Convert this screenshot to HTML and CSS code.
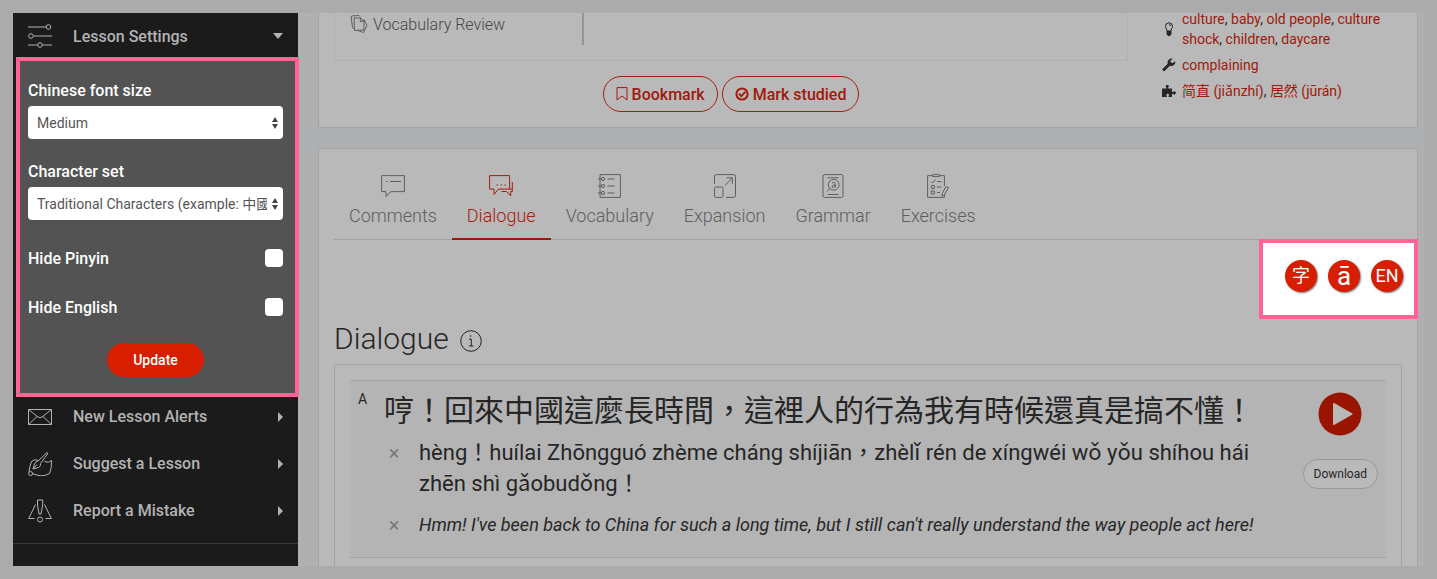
FILE: index.html
```html
<!DOCTYPE html>
<html lang="en">
<head>
    <meta charset="UTF-8">
    <meta name="viewport" content="width=device-width, initial-scale=1.0">
    <title>Lesson - Dialogue</title>
    <link rel="stylesheet" href="styles.css">
</head>
<body>

    <div class="page">
        <aside class="sidebar">
            <button class="side-item side-head" type="button">
                <svg class="side-icon" viewBox="0 0 24 24"><path d="M0 3h18M6 12h18M0 21h9.500M14.500 21H24"/><circle cx="20.500" cy="3" r="2.300"/><circle cx="3" cy="12" r="2.300"/><circle cx="12" cy="21" r="2.300"/></svg>
                <span>Lesson Settings</span>
                <svg class="caret" viewBox="0 0 10 6"><path d="M0 0h10L5 6z"/></svg>
            </button>

            <form class="settings">
                <div class="field">
                    <label for="font-size">Chinese font size</label>
                    <div class="select-wrap">
                        <select id="font-size">
                            <option>Small</option>
                            <option selected>Medium</option>
                            <option>Large</option>
                        </select>
                        <svg class="select-arrows" viewBox="0 0 6 12"><path d="M3 0l3 5H0zM0 7h6l-3 5z"/></svg>
                    </div>
                </div>
                <div class="field">
                    <label for="char-set">Character set</label>
                    <div class="select-wrap">
                        <select id="char-set">
                            <option>Traditional Characters (example: 中國)</option>
                            <option>Simplified Characters (example: 中国)</option>
                        </select>
                        <svg class="select-arrows" viewBox="0 0 6 12"><path d="M3 0l3 5H0zM0 7h6l-3 5z"/></svg>
                    </div>
                </div>
                <div class="check-row">
                    <label for="hide-pinyin">Hide Pinyin</label>
                    <input type="checkbox" id="hide-pinyin">
                </div>
                <div class="check-row">
                    <label for="hide-english">Hide English</label>
                    <input type="checkbox" id="hide-english">
                </div>
                <button class="update-button" type="button">Update</button>
            </form>

            <nav class="side-nav">
                <button class="side-item" type="button">
                    <svg class="side-icon" viewBox="0 0 24 24"><path d="M.5 4.500h23v15H.5zM.5 4.500L10 12q2 1.500 4 0l9.500-7.500M.5 19.500l8.500-8M23.500 19.500l-8.500-8"/></svg>
                    <span>New Lesson Alerts</span>
                    <svg class="caret-right" viewBox="0 0 5 10"><path d="M0 0l5 5-5 5z"/></svg>
                </button>
                <button class="side-item" type="button">
                    <svg class="side-icon" viewBox="0 0 24 24"><path d="M11 8.500Q6.500 6.500 3.500 9.500Q1.500 14 1 20M4.500 21.500Q14 26 21.500 21.500Q24 16 23.500 8.500Q20.500 11.500 16.500 9.500"/><path d="M5 17l1.500-5q1-2.500 3.500-3L19 .5q1.200.3.5 1.500l-7 9.500q.5 3-2 4zM5 17l4-4.500"/><circle cx="2.600" cy="21.600" r="2"/></svg>
                    <span>Suggest a Lesson</span>
                    <svg class="caret-right" viewBox="0 0 5 10"><path d="M0 0l5 5-5 5z"/></svg>
                </button>
                <button class="side-item" type="button">
                    <svg class="side-icon" viewBox="0 0 24 24"><path d="M7.500 5.500L.7 19.500H6.500M16.500 5.500l6.800 14H17.500M9.500 1h5.200v5L13 15h-2L9.500 6z"/><circle cx="12" cy="20.500" r="2.500"/></svg>
                    <span>Report a Mistake</span>
                    <svg class="caret-right" viewBox="0 0 5 10"><path d="M0 0l5 5-5 5z"/></svg>
                </button>
            </nav>
        </aside>

        <main class="main">
            <section class="card lesson-card">
                <div class="lesson-left">
                    <div class="downloads">
                        <a class="review-link" href="#">
                            <svg class="review-icon" viewBox="0 0 18 18"><path d="M1 1.500L3 .8l6-.3.800 1M1 1.500l1.500 11 1.500 1.500M4 3h6.500L14 6v9l-9.500.5zM10.500 3l-.3 3.500L14 6M14 4.500l3 6-3.500 7L8 15.500"/></svg>
                            Vocabulary Review
                        </a>
                        <div class="divider"></div>
                    </div>
                    <div class="actions">
                        <button class="outline-button" type="button">
                            <svg class="bookmark-icon" viewBox="0 0 12 14"><path d="M1 .6h10v12.400L6 9 1 13z"/></svg>
                            Bookmark
                        </button>
                        <button class="outline-button" type="button">
                            <svg class="check-icon" viewBox="0 0 14 14"><circle cx="7" cy="7" r="5.600"/><path d="M4 6.800l2.300 2.300 4-4.200"/></svg>
                            Mark studied
                        </button>
                    </div>
                </div>
                <ul class="tags">
                    <li>
                        <svg class="tag-icon bulb" viewBox="0 0 14 14"><path d="M5.300 9.500C5.300 7.500 3.500 6.500 3.500 4.300a3.500 3.500 0 0 1 7 0C10.500 6.500 8.700 7.500 8.700 9.500z"/><path class="solid" d="M5 9h4v3L8 13.500H6L5 12z"/><path d="M7 2.600q1.500 0 1.700 1.400"/></svg>
                        <span><a href="#">culture</a>, <a href="#">baby</a>, <a href="#">old people</a>, <a href="#">culture shock</a>, <a href="#">children</a>, <a href="#">daycare</a></span>
                    </li>
                    <li>
                        <svg class="tag-icon" viewBox="0 0 14 14"><path d="M13.200 3.200a4 4 0 0 1-5.300 4.600L3.100 12.600a1.400 1.400 0 0 1-2.200 0 1.400 1.400 0 0 1 0-2L5.800 5.800A4 4 0 0 1 10.900.7L8.600 2.500v2l2 .5z"/></svg>
                        <span><a href="#">complaining</a></span>
                    </li>
                    <li>
                        <svg class="tag-icon" viewBox="0 0 14 14"><path d="M0 4.500h4.300C5 4 3.600 3 3.700 2 3.800.5 6.800.5 6.900 2 7 3 5.700 4 6.400 4.500H10V8c.8.500 1.300-.7 2.300-.7 2 0 2 3.200 0 3.200-1 0-1.500-1.200-2.300-.7V13H6.600c-.6-.7.500-1.400.4-2.300-.1-1.300-2.500-1.300-2.600 0-.1.900 1 1.600.4 2.300H0z"/></svg>
                        <span><a href="#">简直 (jiǎnzhí)</a>, <a href="#">居然 (jūrán)</a></span>
                    </li>
                </ul>
            </section>

            <section class="card content-card">
                <nav class="tabs">
                    <a class="tab" href="#">
                        <svg class="tab-icon" viewBox="0 0 24 24"><path d="M.6 1.600h22.800v16H10L5 22.500v-4.900H.6z"/><path d="M9 7.500h11M5 7.500h1.500"/></svg>
                        Comments
                    </a>
                    <a class="tab active" href="#">
                        <svg class="tab-icon" viewBox="0 0 24 24"><path d="M.6 1.600h20v13.500H9.500L5 20.500v-5.400H.6z"/><path d="M23.300 8v9.500h-1.600v4.500l-4.200-4.500h-5M20.600 15.100h2.700"/><path d="M7.500 11H9M11.500 11H13M15.500 11H17"/></svg>
                        Dialogue
                    </a>
                    <a class="tab" href="#">
                        <svg class="tab-icon" viewBox="0 0 24 24"><path d="M2 .6h20.400v22.800H2zM9.500 5h7M9.500 12h7M9.500 19h7M0 5h3M0 12h3M0 19h3"/><circle cx="5" cy="5" r="1.600"/><circle cx="5" cy="12" r="1.600"/><circle cx="5" cy="19" r="1.600"/></svg>
                        Vocabulary
                    </a>
                    <a class="tab" href="#">
                        <svg class="tab-icon" viewBox="0 0 24 24"><path d="M1.500 10V2.600Q1.500.6 3.500.6h17q2 0 2 2v18.800q0 2-2 2H13M12 11.500l7-7.500M13.500 3.800H19.300v6"/><rect x="1.500" y="13" width="8.500" height="10.400" rx="1.500"/></svg>
                        Expansion
                    </a>
                    <a class="tab" href="#">
                        <svg class="tab-icon" viewBox="0 0 24 24"><rect x="2" y=".6" width="20" height="22.800" rx="1.500"/><path d="M6.500 3.800h11M6.500 20.500h11M8.800 14.500l-2.800 3"/><circle cx="12.700" cy="10.800" r="5.400"/><path d="M11 9q1.500-1 2.700-.3.700.5.700 1.500v3.200M14.400 11q-3-.3-3.400 1.200 0 1.500 1.600 1.200 1.200-.3 1.800-1.200"/></svg>
                        Grammar
                    </a>
                    <a class="tab" href="#">
                        <svg class="tab-icon" viewBox="0 0 24 24"><path d="M7 1.600H1.600v21.800h16.800V21M18.400 12V1.600H13M6.500.6h7v2h-7zM5 7.500l1.500 1.500 3-3.500M11 7.500h4.500M11 13h4.500M11 18.500h3M5.300 11.500h3v3h-3zM5.300 17h3v3h-3zM20 12.500l2.500 1.200-4.200 7.300-2.300 1 .2-2.500z"/></svg>
                        Exercises
                    </a>
                </nav>

                <div class="display-tools">
                    <button class="round-button" type="button">字</button>
                    <button class="round-button tone" type="button">ā</button>
                    <button class="round-button" type="button">EN</button>
                </div>

                <h1 class="title">
                    Dialogue
                    <svg class="info-icon" viewBox="0 0 22 22"><circle cx="11" cy="11" r="10.300"/><path d="M9 9.200h2.300v6.800M8.800 16h4.600M10.600 5.200v1.600"/></svg>
                </h1>

                <div class="dialogue-box">
                    <article class="line">
                        <div class="speaker">A</div>
                        <div class="line-text">
                            <p class="hanzi" lang="zh-Hant">哼！回來中國這麼長時間，這裡人的行為我有時候還真是搞不懂！</p>
                            <div class="sub-line">
                                <button class="hide-button" type="button" aria-label="Hide pinyin">×</button>
                                <p class="pinyin" lang="zh-Hant">hèng！huílai Zhōngguó zhème cháng shíjiān，zhèlǐ rén de xíngwéi wǒ yǒu shíhou hái zhēn shì gǎobudǒng！</p>
                            </div>
                            <div class="sub-line">
                                <button class="hide-button" type="button" aria-label="Hide English">×</button>
                                <p class="english">Hmm! I've been back to China for such a long time, but I still can't really understand the way people act here!</p>
                            </div>
                        </div>
                        <div class="line-actions">
                            <button class="play-button" type="button" aria-label="Play">
                                <svg viewBox="0 0 44 44"><circle cx="22" cy="22" r="21.500"/><path d="M16 12l17.500 10L16 32z"/></svg>
                            </button>
                            <button class="download-button" type="button">Download</button>
                        </div>
                    </article>
                </div>
            </section>
        </main>
    </div>

</body>
</html>
```
FILE: styles.css
```css
* {
    box-sizing: border-box;
}
body {
    display: flex;
    margin: 0;
    padding: 13px;
    min-height: 100vh;
    background-color: #ababab;
    color: #262626;
    font-family: Roboto, "Noto Sans CJK TC", sans-serif;
    font-size: 16px;
}
button, select, input {
    font-family: inherit;
    margin: 0;
}
a {
    text-decoration: none;
}
svg {
    flex: none;
    fill: none;
    stroke: currentColor;
}
.page {
    display: flex;
    flex: 1;
    min-width: 0;
    background-color: #afb0b2;
}

/* sidebar */
.sidebar {
    flex: none;
    width: 285px;
    background-color: #1b1b1b;
    color: #b3b3b3;
}
.side-item {
    display: flex;
    align-items: center;
    width: 100%;
    height: 47px;
    padding: 0 15px;
    border: none;
    background: none;
    color: inherit;
    font-size: 16px;
    font-weight: 500;
    text-align: left;
    cursor: pointer;
}
.side-head {
    height: 44px;
    padding-top: 2px;
}
.side-item span {
    flex: 1;
    margin-left: 21px;
}
.side-icon {
    width: 24px;
    height: 24px;
}
.caret {
    width: 10px;
    height: 6px;
    fill: currentColor;
    stroke: none;
}
.caret-right {
    width: 5px;
    height: 10px;
    fill: currentColor;
    stroke: none;
}
.side-nav {
    margin-top: -4px;
    padding-bottom: 9px;
    border-bottom: 1px solid #373737;
}
.settings {
    position: relative;
    margin: 0 -1px 0 3px;
    padding: 20px 12px 16px 8px;
    border: 4px solid #ff6492;
    background-color: #535353;
    color: #fff;
    font-weight: 500;
    line-height: 20px;
}
.field {
    margin-bottom: 23px;
}
.field label {
    display: block;
    margin-bottom: 5px;
}
.select-wrap {
    position: relative;
}
.select-wrap select {
    appearance: none;
    display: block;
    width: 100%;
    height: 33px;
    padding: 0 16px 0 9px;
    border: none;
    border-radius: 4px;
    background-color: #fff;
    color: #555;
    font-size: 14px;
}
.select-arrows {
    position: absolute;
    top: 11px;
    right: 5px;
    width: 6px;
    height: 12px;
    fill: #444;
    stroke: none;
}
.check-row {
    display: flex;
    justify-content: space-between;
    margin-top: 29px;
}
.check-row input {
    appearance: none;
    width: 18px;
    height: 18px;
    border-radius: 4px;
    background-color: #fff;
}
.update-button {
    display: block;
    height: 34px;
    margin: 25px auto 0;
    padding: 0 26px;
    border: none;
    border-radius: 17px;
    background-color: #d71e00;
    color: #fff;
    font-size: 14px;
    font-weight: 500;
}

/* main area */
.main {
    display: flex;
    flex: 1;
    flex-direction: column;
    min-width: 0;
    padding: 0 6px 0 20px;
}
.card {
    border: 1px solid #a3a3a3;
    background-color: #b9b9b9;
}
.lesson-card {
    display: flex;
    padding: 0 15px;
    border-top: none;
}
.lesson-left {
    flex: 1;
    padding-bottom: 15px;
}
.downloads {
    display: flex;
    height: 48px;
    padding-left: 15px;
    border: 1px solid #b0b0b0;
    border-top: none;
}
.review-link {
    display: flex;
    align-items: center;
    gap: 5px;
    width: 232px;
    height: 22px;
    color: #484848;
    font-weight: 300;
}
.review-icon {
    width: 18px;
    height: 18px;
    stroke-width: 0.8;
}
.divider {
    width: 2px;
    height: 32px;
    background-color: #959595;
}
.actions {
    display: flex;
    justify-content: center;
    gap: 4px;
    margin-top: 15px;
}
.outline-button {
    display: flex;
    align-items: center;
    gap: 4px;
    height: 36px;
    padding: 0 12px;
    border: 1px solid #a51c0c;
    border-radius: 18px;
    background: none;
    color: #a0190b;
    font-size: 16px;
    font-weight: 500;
}
.bookmark-icon {
    width: 12px;
    height: 14px;
}
.check-icon {
    width: 14px;
    height: 14px;
    stroke-width: 2;
}
.tags {
    width: 274px;
    margin: -4px 0 0;
    padding: 0 12px 0 34px;
    list-style: none;
    font-size: 14px;
    line-height: 20px;
}
.tags li {
    display: flex;
    align-items: center;
    gap: 6px;
    margin-bottom: 6px;
}
.tags a {
    color: #a0190b;
}
.tag-icon {
    width: 14px;
    height: 14px;
    fill: currentColor;
    stroke: none;
}
.tag-icon.bulb {
    fill: none;
    stroke: currentColor;
}
.tag-icon .solid {
    fill: currentColor;
}
.content-card {
    display: flex;
    flex: 1;
    flex-direction: column;
    margin-top: 20px;
    padding: 0 15px;
    border-bottom: none;
}
.tabs {
    display: flex;
    border-bottom: 1px solid #a3a3a3;
}
.tab {
    display: flex;
    flex-direction: column;
    align-items: center;
    gap: 6px;
    margin-bottom: -1px;
    padding: 25px 15px 10px;
    border-bottom: 2px solid transparent;
    color: #5e5e5e;
    font-size: 18px;
    font-weight: 300;
    line-height: 24px;
}
.tab.active {
    border-bottom-color: #a51505;
    color: #a51c0c;
}
.tab-icon {
    width: 24px;
    height: 24px;
}
.display-tools {
    position: relative;
    display: flex;
    gap: 11px;
    width: 159px;
    height: 80px;
    margin: -1px -16px 0 auto;
    padding: 17px 11px 0 22px;
    border: 4px solid #ff6492;
    background-color: #fff;
}
.round-button {
    width: 32px;
    height: 32px;
    padding: 0;
    border: none;
    border-radius: 50%;
    background-color: #d71e00;
    box-shadow: 1px 1px 2px #777;
    color: #fff;
    font-size: 18px;
    line-height: 32px;
}
.round-button.tone {
    font-size: 26px;
}
.title {
    display: flex;
    align-items: center;
    gap: 11px;
    margin: 0;
    font-size: 30px;
    font-weight: 300;
    line-height: 40px;
}
.info-icon {
    width: 22px;
    height: 22px;
    margin-top: 4px;
}
.dialogue-box {
    flex: 1;
    margin-top: 5px;
    padding: 15px 15px 8px;
    border: 1px solid #a3a3a3;
    border-bottom: none;
}
.line {
    display: flex;
    padding: 8px 8px 17px;
    border: solid #a3a3a3;
    border-width: 1px 0;
    background-color: #b4b4b4;
}
.speaker {
    width: 26px;
    font-size: 14px;
    line-height: 20px;
}
.line-text {
    flex: 1;
    padding-right: 32px;
}
.line-text p {
    margin: 0;
}
.hanzi {
    font-size: 30px;
    line-height: 44px;
}
.sub-line {
    display: flex;
    margin-top: 4px;
}
.hide-button {
    flex: none;
    width: 20px;
    height: 31px;
    margin-right: 15px;
    padding: 0;
    border: none;
    background: none;
    color: #7a7a7a;
    font-size: 20px;
}
.pinyin {
    font-size: 22px;
    line-height: 31px;
}
.english {
    font-size: 18px;
    font-style: italic;
    line-height: 31px;
}
.sub-line + .sub-line {
    margin-top: 10px;
}
.line-actions {
    display: flex;
    flex-direction: column;
    align-items: center;
    gap: 23px;
    padding-top: 3px;
}
.play-button {
    width: 44px;
    height: 44px;
    padding: 0;
    border: none;
    background: none;
}
.play-button svg {
    display: block;
    stroke: none;
}
.play-button circle {
    fill: #991500;
}
.play-button path {
    fill: #b9b9b9;
    stroke: #b9b9b9;
    stroke-width: 2;
    stroke-linejoin: round;
}
.download-button {
    height: 30px;
    padding: 0 10px;
    border: 1px solid #999;
    border-radius: 15px;
    background-color: #b9b9b9;
    color: #262626;
    font-size: 12px;
}
```
